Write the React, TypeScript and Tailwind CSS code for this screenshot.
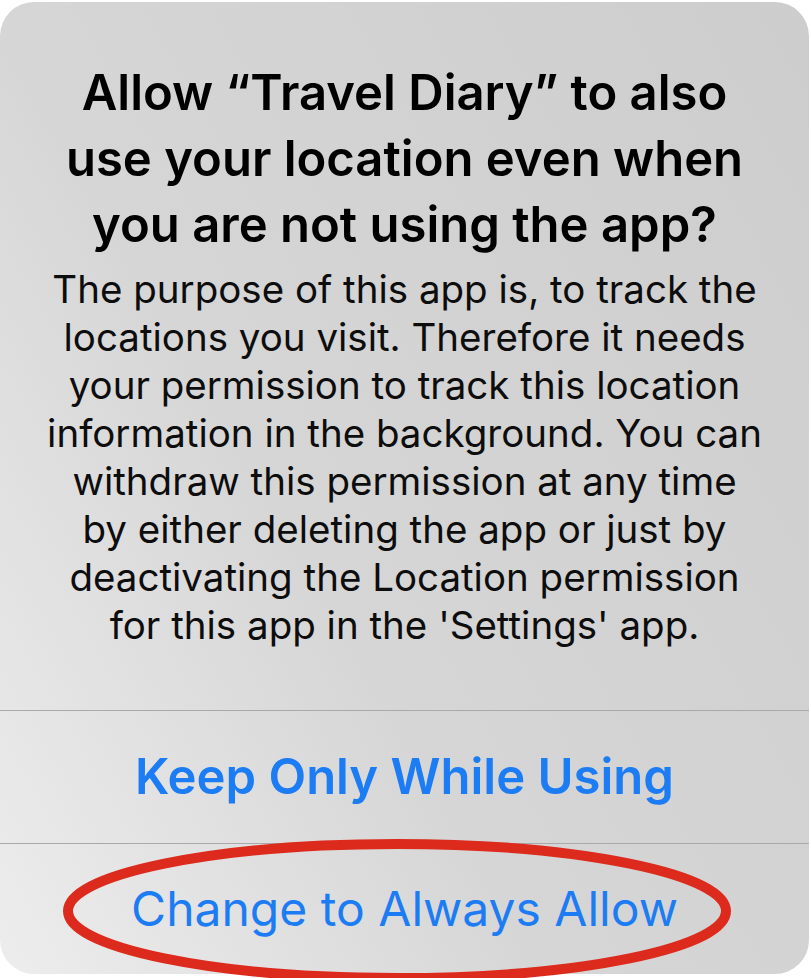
import React from 'react';

const body = [
  'The purpose of this app is, to track the',
  'locations you visit. Therefore it needs',
  'your permission to track this location',
  'information in the background. You can',
  'withdraw this permission at any time',
  'by either deleting the app or just by',
  'deactivating the Location permission',
  "for this app in the 'Settings' app.",
];

const App = () => {
  return (
    <div className="relative w-[811px] h-[978px] bg-white font-['Inter','Roboto',sans-serif] overflow-hidden">
      <div className="mt-[2px] w-[809px] h-[972px] rounded-[34px] overflow-hidden flex flex-col bg-[linear-gradient(60deg,#ededed_0%,#d6d6d6_40%,#cdcdcd_100%)]">
        {/* Message */}
        <div className="flex flex-col items-center pt-[58px] h-[708px]">
          <h1 className="text-center text-[49px] leading-[66px] font-semibold text-black whitespace-nowrap">
            Allow “Travel Diary” to also
            <br />
            use your location even when
            <br />
            you are not using the app?
          </h1>
          <p className="mt-[7px] text-center text-[38.5px] leading-[48px] text-[#0d0d0d] whitespace-nowrap">
            {body.map((line) => (
              <span key={line} className="block">
                {line}
              </span>
            ))}
          </p>
        </div>

        {/* Actions */}
        <div className="h-px bg-[#a9a9a9]" />
        <button className="h-[132px] flex items-center justify-center text-[49px] font-semibold text-[#1c7cf4]">
          Keep Only While Using
        </button>
        <div className="h-px bg-[#a9a9a9]" />
        <button className="flex-1 flex items-center justify-center text-[48px] text-[#1c7cf4]">
          Change to Always Allow
        </button>
      </div>

      {/* annotation */}
      <svg className="absolute left-0 top-0 pointer-events-none" width="811" height="978">
        <ellipse cx="397" cy="911" rx="329" ry="67" fill="none" stroke="#dc2a1c" strokeWidth="10" />
      </svg>
    </div>
  );
};

export default App;
